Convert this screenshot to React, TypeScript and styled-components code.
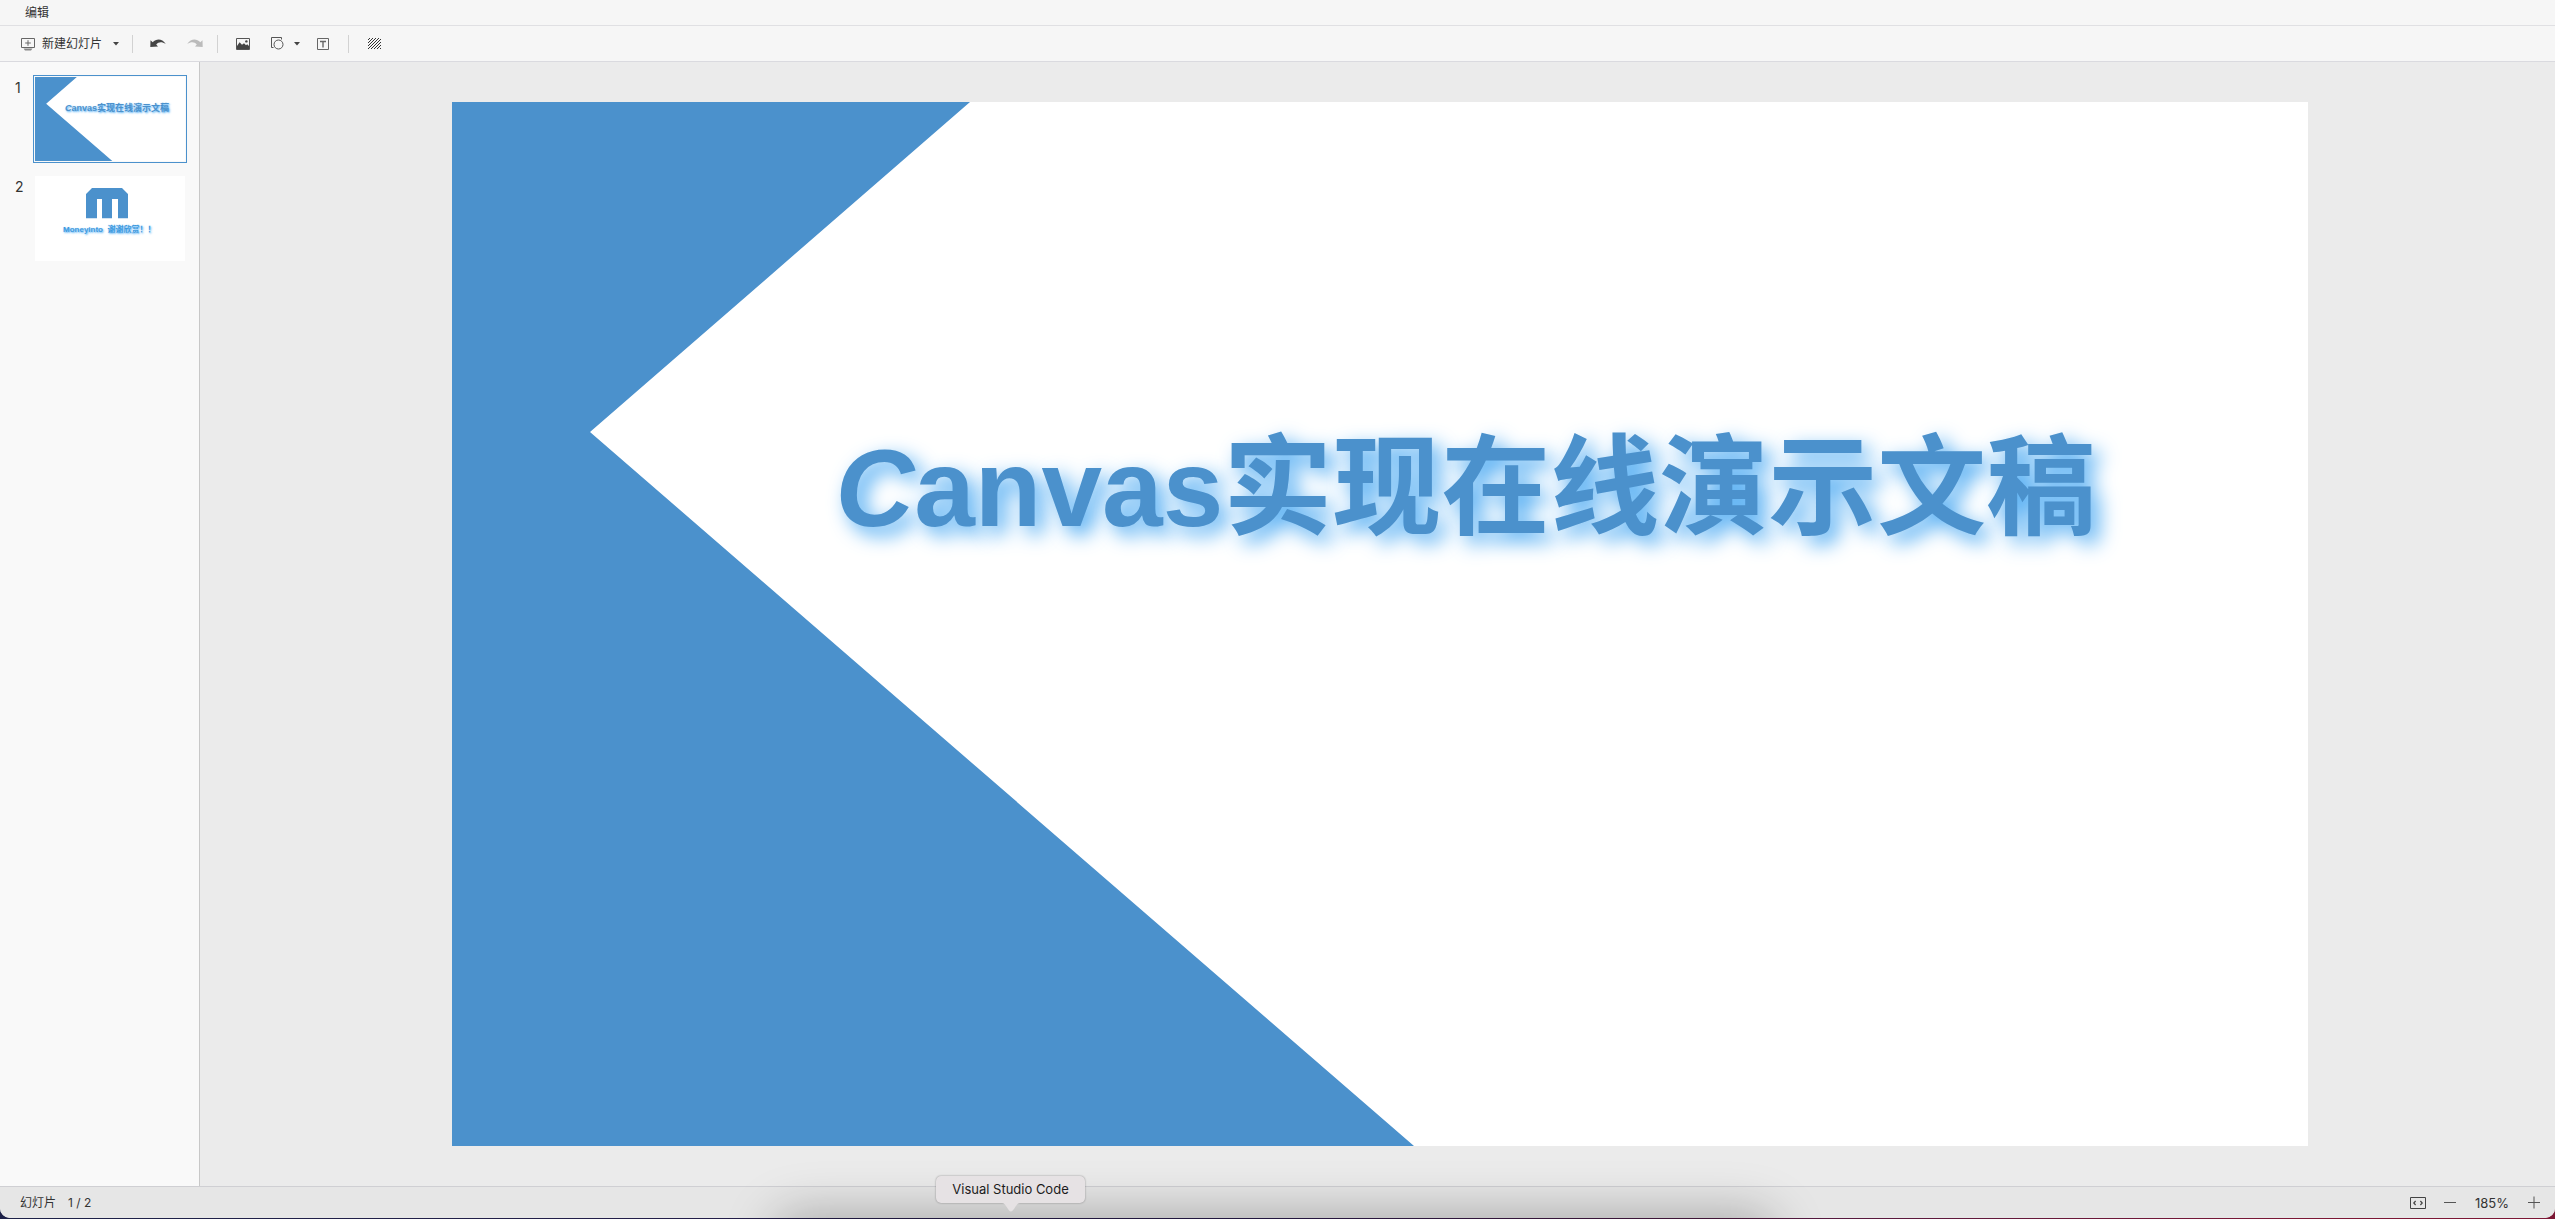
import React from "react";
import styled, { createGlobalStyle, css } from "styled-components";

const blue = "#4b91cc";
const uiFont = `Inter, "Noto Sans CJK SC", sans-serif`;
const slideFont = `"Liberation Sans", "Noto Sans CJK SC", sans-serif`;

const GlobalStyle = createGlobalStyle`
  *, *::before, *::after { box-sizing: border-box; }
  body { margin: 0; }
`;

const Desktop = styled.div`
  position: relative;
  height: 100vh;
  padding-bottom: 1px;
  overflow: hidden;
  background: linear-gradient(90deg, #1d2148, #2a1c4a 50%, #7c1735 90%);
  font: 12px/16px ${uiFont};
  color: #333;
`;

const Window = styled.div`
  display: flex;
  flex-direction: column;
  height: 100%;
  overflow: hidden;
  border-radius: 0 0 10px 10px;
  background: #ebebeb;
`;

const MenuBar = styled.nav`
  display: flex;
  flex: none;
  align-items: center;
  height: 26px;
  padding: 0 25px;
  border-bottom: 1px solid #e0e0e3;
  background: #f6f6f6;
`;

const PlainButton = styled.button`
  display: flex;
  align-items: center;
  justify-content: center;
  padding: 0;
  border: 0;
  background: none;
  color: inherit;
  font: inherit;
`;

const ToolBar = styled.div`
  display: flex;
  flex: none;
  align-items: center;
  height: 36px;
  padding-left: 20px;
  border-bottom: 1px solid #dadadf;
  background: #f6f6f6;
`;

const ToolButton = styled(PlainButton)<{ $width: number }>`
  width: ${(p) => p.$width}px;
  height: 24px;
`;

const NewSlideButton = styled(PlainButton)`
  gap: 6px;
  height: 24px;
`;

const Divider = styled.span<{ $gap: number }>`
  width: 1px;
  height: 18px;
  margin: 0 ${(p) => p.$gap}px;
  background: #d2d2d2;
`;

const Body = styled.div`
  display: flex;
  flex: 1;
  min-height: 0;
`;

const Sidebar = styled.ol`
  display: flex;
  flex: none;
  flex-direction: column;
  gap: 11px;
  width: 200px;
  margin: 0;
  padding: 13px 12px 0 15px;
  border-right: 1px solid #c8c8c8;
  background: #f9f9f9;
  list-style: none;
`;

const ThumbRow = styled.li`
  display: flex;
  align-items: flex-start;
`;

const ThumbNumber = styled.span`
  width: 18px;
  padding-top: 5px;
  font-size: 14px;
`;

const Thumb = styled(PlainButton)<{ $active: boolean }>`
  display: block;
  width: 154px;
  padding: 1px;
  border: 1px solid ${(p) => (p.$active ? blue : "transparent")};
`;

const Stage = styled.main`
  display: flex;
  flex: 1;
  justify-content: center;
  min-width: 0;
  padding: 40px 0 40px 4px;
`;

const SlideSurface = styled.div<{ $small: boolean }>`
  position: relative;
  aspect-ratio: 16 / 9;
  ${(p) => (p.$small ? css`width: 100%;` : css`height: 100%;`)}
  background: #fff;
`;

const SlideArt = styled.svg`
  display: block;
  width: 100%;
  height: 100%;
`;

const Title = styled.span<{ $small: boolean }>`
  position: absolute;
  top: 37%;
  transform: translateY(-50%);
  color: ${blue};
  font-family: ${slideFont};
  font-weight: 700;
  line-height: 1;
  white-space: nowrap;
  ${(p) =>
    p.$small
      ? css`
          left: 30px;
          font-size: 9px;
          text-shadow: 1px 1px 2px #48a8f2;
        `
      : css`
          left: 384px;
          font-size: 109px;
          text-shadow: 8px 8px 20px #48a8f2;
        `}
`;

const Thanks = styled.span`
  position: absolute;
  top: 63%;
  left: 28px;
  transform: translateY(-50%);
  color: #3f9ade;
  font: 700 8px/1 ${slideFont};
  text-shadow: 1px 1px 2px #48a8f2;
  white-space: pre;
`;

const StatusBar = styled.footer`
  display: flex;
  flex: none;
  align-items: center;
  justify-content: space-between;
  height: 32px;
  padding: 0 14px 0 20px;
  border-top: 1px solid #cfcfd3;
  background: #e6e6e6;
`;

const PageInfo = styled.div`
  display: flex;
  gap: 12px;
`;

const ZoomTools = styled.div`
  display: flex;
  align-items: center;
  gap: 17px;
`;

const ZoomValue = styled.output`
  min-width: 36px;
  font-size: 13px;
  text-align: center;
`;

const DockGlow = styled.div`
  position: absolute;
  top: 100%;
  left: 780px;
  width: 990px;
  height: 60px;
  border-radius: 20px;
  box-shadow: 0 0 50px 6px rgba(0, 0, 0, 0.26);
`;

const DockTip = styled.div`
  position: absolute;
  bottom: 16px;
  left: 936px;
  width: 149px;
  padding: 5px 0 6px;
  border-radius: 5px;
  background: #e6e2e4;
  box-shadow: 0 0 2px rgba(0, 0, 0, 0.4);
  color: #1c1c1c;
  font-size: 13px;
  text-align: center;
`;

const TipArrow = styled.svg`
  position: absolute;
  top: 100%;
  left: 66px;
  display: block;
`;

const Caret = () => (
  <svg width="6" height="4" viewBox="0 0 6 4">
    <path d="M0 0H6L3 3.5Z" fill="#444" />
  </svg>
);

const NewSlideIcon = () => (
  <svg width="16" height="14" viewBox="0 0 16 14" fill="none" stroke="#666">
    <path d="M1.5 1.5H14.5V10.5H1.5Z" />
    <path d="M8 3.2V8.8M5.2 6H10.8" />
    <path d="M3.5 11.5H12.5L11 13.5H5Z" fill="#888" stroke="none" />
  </svg>
);

const UndoIcon = ({ color, flip = false }: { color: string; flip?: boolean }) => (
  <svg width="16" height="9" viewBox="0 0 16 9">
    <path
      transform={flip ? "translate(16 0) scale(-1 1)" : undefined}
      d="M0.5 1.2L2.7 3.2C6.5 -0.6 12 -0.6 15.8 5C12 2.4 8.6 2.6 6.2 5.4L8 7.6L0.3 8Z"
      fill={color}
    />
  </svg>
);

const ImageIcon = () => (
  <svg width="14" height="12" viewBox="0 0 14 12">
    <path d="M0.5 0.5H13.5V11.5H0.5Z" fill="none" stroke="#555" />
    <path d="M1 8L3.6 4.2L6 6.8L8 5.2L10 7.2L11.2 6.2L13 8V11H1Z" fill="#444" />
    <circle cx="10.4" cy="3.4" r="1.2" fill="#444" />
  </svg>
);

const ShapeIcon = () => (
  <svg width="14" height="13" viewBox="0 0 14 13" fill="none" stroke="#555">
    <path d="M3.5 10.5H1.5V0.5H11.5V2.5" />
    <circle cx="8.5" cy="7.5" r="4.5" />
  </svg>
);

const TextIcon = () => (
  <svg width="12" height="12" viewBox="0 0 12 12" fill="none" stroke="#666">
    <path d="M0.5 0.5H11.5V11.5H0.5Z" />
    <path d="M3 3.5H9M6 3.5V9.5" strokeWidth="1.4" />
  </svg>
);

const HatchIcon = () => (
  <svg width="13" height="11" viewBox="0 0 13 11" stroke="#333">
    <path d="M0 2L2 0M0 5L5 0M0 8L8 0M0 11L11 0M3 11L13 1M6 11L13 4M9 11L13 7M12 11L13 10" />
  </svg>
);

const FitIcon = () => (
  <svg width="16" height="12" viewBox="0 0 16 12" fill="none" stroke="#444">
    <path d="M0.5 0.5H15.5V11.5H0.5Z" />
    <path d="M5.6 4L3.8 6L5.6 8M10.4 4L12.2 6L10.4 8" strokeWidth="1.2" />
  </svg>
);

const CoverSlide = ({ small = false }: { small?: boolean }) => (
  <SlideSurface $small={small}>
    <SlideArt viewBox="0 0 1856 1044" preserveAspectRatio="none">
      <path d="M0 0H518L138 330L962 1044H0Z" fill={blue} />
    </SlideArt>
    <Title $small={small}>
      <em>C</em>anvas实现在线演示文稿
    </Title>
  </SlideSurface>
);

const ThanksSlide = () => (
  <SlideSurface $small>
    <SlideArt viewBox="0 0 150 84" preserveAspectRatio="none">
      <path d="M51 18L57 12H87L93 18V42H83V23H77V42H67V23H62V42H51Z" fill={blue} />
    </SlideArt>
    <Thanks>{"Moneyinto  谢谢欣赏！！"}</Thanks>
  </SlideSurface>
);

export default function App() {
  return (
    <Desktop>
      <GlobalStyle />
      <Window>
        <MenuBar>
          <PlainButton>编辑</PlainButton>
        </MenuBar>
        <ToolBar>
          <NewSlideButton>
            <NewSlideIcon />
            新建幻灯片
          </NewSlideButton>
          <ToolButton $width={28} aria-label="新建选项"><Caret /></ToolButton>
          <Divider $gap={2} />
          <ToolButton $width={46} aria-label="撤销"><UndoIcon color="#444" /></ToolButton>
          <ToolButton $width={28} aria-label="重做"><UndoIcon color="#bbb" flip /></ToolButton>
          <Divider $gap={8} />
          <ToolButton $width={34} aria-label="图片"><ImageIcon /></ToolButton>
          <ToolButton $width={34} aria-label="形状"><ShapeIcon /></ToolButton>
          <ToolButton $width={6} aria-label="形状选项"><Caret /></ToolButton>
          <ToolButton $width={46} aria-label="文本框"><TextIcon /></ToolButton>
          <Divider $gap={2} />
          <ToolButton $width={46} aria-label="背景"><HatchIcon /></ToolButton>
        </ToolBar>
        <Body>
          <Sidebar>
            <ThumbRow>
              <ThumbNumber>1</ThumbNumber>
              <Thumb $active aria-label="幻灯片 1"><CoverSlide small /></Thumb>
            </ThumbRow>
            <ThumbRow>
              <ThumbNumber>2</ThumbNumber>
              <Thumb $active={false} aria-label="幻灯片 2"><ThanksSlide /></Thumb>
            </ThumbRow>
          </Sidebar>
          <Stage>
            <CoverSlide />
          </Stage>
        </Body>
        <StatusBar>
          <PageInfo>
            <span>幻灯片</span>
            <span>1 / 2</span>
          </PageInfo>
          <ZoomTools>
            <PlainButton aria-label="适应窗口"><FitIcon /></PlainButton>
            <PlainButton aria-label="缩小">
              <svg width="14" height="14" viewBox="0 0 14 14" stroke="#555"><path d="M1 6.5H13" /></svg>
            </PlainButton>
            <ZoomValue>185%</ZoomValue>
            <PlainButton aria-label="放大">
              <svg width="14" height="14" viewBox="0 0 14 14" stroke="#555"><path d="M1 6.5H13M7 0.5V12.5" /></svg>
            </PlainButton>
          </ZoomTools>
        </StatusBar>
      </Window>
      <DockGlow />
      <DockTip role="tooltip">
        Visual Studio Code
        <TipArrow width="18" height="9" viewBox="0 0 18 9">
          <path d="M0 0C4 0 6 8.5 9 8.5S14 0 18 0Z" fill="#e6e2e4" />
        </TipArrow>
      </DockTip>
    </Desktop>
  );
}
